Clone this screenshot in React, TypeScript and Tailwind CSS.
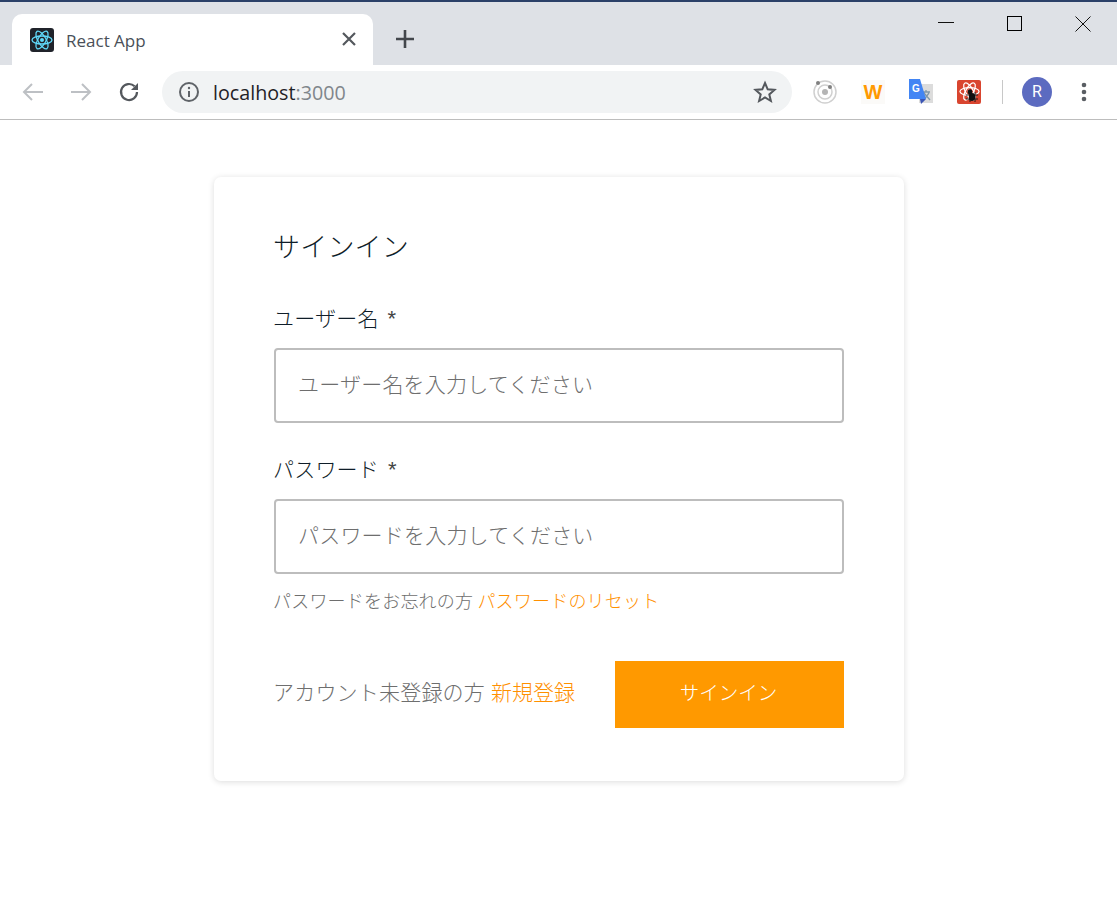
import React from "react";

const Atom = ({ color, size, stroke = 1.4 }: { color: string; size: number; stroke?: number }) => (
  <svg width={size} height={size} viewBox="0 0 24 24" fill="none" stroke={color} strokeWidth={stroke}>
    <ellipse cx="12" cy="12" rx="10" ry="4" />
    <ellipse cx="12" cy="12" rx="10" ry="4" transform="rotate(60 12 12)" />
    <ellipse cx="12" cy="12" rx="10" ry="4" transform="rotate(120 12 12)" />
    <circle cx="12" cy="12" r="2" fill={color} stroke="none" />
  </svg>
);

export default function App() {
  return (
    <div className="min-h-[898px] bg-white font-['Noto_Sans_CJK_JP','Noto_Sans',sans-serif]">
      <div className="h-[2px] bg-[#2b4068]" />
      <div className="flex h-[63px] bg-[#dee1e6] pl-[12px]">
        <div className="mt-[12px] flex h-[51px] w-[361px] items-center rounded-t-[10px] bg-white pl-[18px] pr-[16px]">
          <div className="flex h-[24px] w-[24px] items-center justify-center rounded-[3px] bg-[#20232a]">
            <Atom color="#61dafb" size={24} stroke={1.3} />
          </div>
          <span className="ml-[12px] pt-[2px] font-['Open_Sans',sans-serif] text-[17px] text-[#4a5058]">React App</span>
          <svg className="mb-[2px] ml-auto" width="16" height="16" viewBox="0 0 16 16" stroke="#54585d" strokeWidth="2.2">
            <path d="M2 2 L14 14 M14 2 L2 14" />
          </svg>
        </div>
        <svg className="ml-[22px] mt-[27px]" width="20" height="20" viewBox="0 0 20 20" stroke="#43474c" strokeWidth="2.6">
          <path d="M10 1 V19 M1 10 H19" />
        </svg>
        <div className="ml-auto flex h-[46px] items-start">
          <svg className="mr-[53px] mt-[20px]" width="16" height="2" viewBox="0 0 16 2"><path d="M0 0.5 H16" stroke="#111" strokeWidth="1" /></svg>
          <div className="mr-[53px] mt-[14px] h-[15px] w-[15px] border border-black" />
          <svg className="mr-[26px] mt-[14px]" width="16" height="16" viewBox="0 0 16 16"><path d="M0.5 0.5 L15.5 15.5 M15.5 0.5 L0.5 15.5" stroke="#111" strokeWidth="1" /></svg>
        </div>
      </div>
      <div className="flex h-[55px] items-center border-b border-[#bdbdbd] pb-[1px]">
        <svg className="ml-[21px]" width="24" height="24" viewBox="0 0 24 24" fill="none" stroke="#bdc0c4" strokeWidth="2">
          <path d="M22 12 H3 M11 4 L3 12 L11 20" />
        </svg>
        <svg className="ml-[24px]" width="24" height="24" viewBox="0 0 24 24" fill="none" stroke="#bdc0c4" strokeWidth="2">
          <path d="M2 12 H21 M13 4 L21 12 L13 20" />
        </svg>
        <svg className="ml-[24px]" width="24" height="24" viewBox="0 0 24 24" fill="none">
          <path d="M20 12 A8 8 0 1 1 17.6 6.3" stroke="#54585d" strokeWidth="2.2" />
          <path d="M21 3 V10 H14 Z" fill="#54585d" />
        </svg>
        <div className="ml-[21px] flex h-[42px] w-[630px] items-center rounded-full bg-[#f1f3f4] pl-[16px] pr-[15px]">
          <svg width="22" height="22" viewBox="0 0 22 22" fill="none">
            <circle cx="11" cy="11" r="9" stroke="#5f6368" strokeWidth="2" />
            <path d="M11 10 V16" stroke="#5f6368" strokeWidth="2" />
            <circle cx="11" cy="7" r="1.2" fill="#5f6368" />
          </svg>
          <span className="ml-[13px] pt-[2px] font-['Open_Sans',sans-serif] text-[19.7px] leading-none">
            <span className="text-[#1f2226]">localhost</span>
            <span className="text-[#80868b]">:3000</span>
          </span>
          <svg className="ml-auto" width="24" height="24" viewBox="0 0 24 24" fill="none" stroke="#54585d" strokeWidth="2">
            <path d="M12 3 L14.7 9.3 L21.5 9.9 L16.3 14.4 L17.9 21 L12 17.5 L6.1 21 L7.7 14.4 L2.5 9.9 L9.3 9.3 Z" />
          </svg>
        </div>
        <svg className="ml-[21px]" width="24" height="24" viewBox="0 0 24 24" fill="none">
          <circle cx="12" cy="12" r="11" stroke="#d0d0d0" strokeWidth="1.5" />
          <circle cx="12" cy="12" r="7" stroke="#d0d0d0" strokeWidth="1.5" />
          <circle cx="12" cy="12" r="3" fill="#b5b5b5" />
          <circle cx="5" cy="3" r="2" fill="#808080" />
          <circle cx="17" cy="7" r="2" fill="#808080" />
        </svg>
        <div className="ml-[24px] flex h-[24px] w-[24px] items-center justify-center bg-[#fbfaf8] font-['Liberation_Sans',sans-serif] text-[20px] font-bold leading-none text-[#ff9900]">
          W
        </div>
        <svg className="ml-[24px]" width="24" height="26" viewBox="0 0 24 26">
          <rect x="10" y="5" width="14" height="19" fill="#dcdcdc" />
          <path d="M13 13 H21 M17 11 V13 M14 22 L20 14 M15 14 L21 21" stroke="#7f97a8" strokeWidth="1.3" fill="none" />
          <path d="M0 0 H11 L17 20 H0 Z" fill="#4285f4" />
          <path d="M11 20 H17 L12 25 Z" fill="#3b55b5" />
          <text x="3" y="13" fontSize="10" fontWeight="700" fill="#fff" fontFamily="Liberation Sans">G</text>
        </svg>
        <div className="relative ml-[24px] flex h-[24px] w-[24px] items-center justify-center rounded-[2px] bg-[#d9452f]">
          <Atom color="#ffffff" size={23} stroke={1.3} />
          <svg className="absolute left-[9px] top-[9px]" width="12" height="13" viewBox="0 0 12 13">
            <circle cx="4" cy="3" r="2.4" fill="#111" />
            <ellipse cx="6" cy="8" rx="3.2" ry="4" fill="#111" />
            <path d="M0 6 L12 6 M0 10 L12 10 M4 0 V13 M9 3 V13" stroke="#111" strokeWidth="0.9" />
          </svg>
        </div>
        <div className="ml-[21px] h-[24px] w-px bg-[#c8c8c8]" />
        <div className="ml-[19px] flex h-[30px] w-[30px] items-center justify-center rounded-full bg-[#5c6bc0] font-['Roboto',sans-serif] text-[16px] text-white">
          R
        </div>
        <svg className="ml-[21px]" width="22" height="24" viewBox="0 0 22 24" fill="#5a5e63">
          <circle cx="11" cy="5" r="2.3" />
          <circle cx="11" cy="12" r="2.3" />
          <circle cx="11" cy="19" r="2.3" />
        </svg>
      </div>
      <div className="flex justify-center pl-[1px] pt-[57px]">
        <div className="flex h-[604px] w-[690px] flex-col rounded-[7px] bg-white px-[60px] pt-[49px] shadow-[0_1px_6px_rgba(0,0,0,0.14)]">
          <h1 className="-ml-[1px] h-[40px] text-[27px] font-light leading-[40px] tracking-[0.2px] text-[#0f1d29]">サインイン</h1>
          <label className="-ml-[1px] mt-[37px] h-[30px] text-[21px] font-light leading-[28px] tracking-[0.2px] text-[#0f1d29]">
            ユーザー名<span className="ml-[9px] font-['Liberation_Sans',sans-serif] text-[22px] text-[#444]">*</span>
          </label>
          <input
            readOnly
            placeholder="ユーザー名を入力してください"
            className="mt-[15px] h-[75px] w-full rounded-[4px] border-2 border-[#bdbdbd] pb-[5px] pl-[22px] pr-[23px] text-[21px] font-light tracking-[0.2px] outline-none placeholder:text-[#6e6e6e]"
          />
          <label className="-ml-[1px] mt-[31px] h-[30px] text-[21px] font-light leading-[28px] tracking-[0.2px] text-[#0f1d29]">
            パスワード<span className="ml-[9px] font-['Liberation_Sans',sans-serif] text-[22px] text-[#444]">*</span>
          </label>
          <input
            readOnly
            placeholder="パスワードを入力してください"
            className="mt-[15px] h-[75px] w-full rounded-[4px] border-2 border-[#bdbdbd] pb-[5px] pl-[22px] pr-[23px] text-[21px] font-light tracking-[0.2px] outline-none placeholder:text-[#6e6e6e]"
          />
          <p className="-ml-[1px] mt-[14px] h-[26px] text-[18px] font-light leading-[24px] tracking-[0.2px] text-[#6e6e6e]">
            パスワードをお忘れの方 <span className="text-[#ff9000]">パスワードのリセット</span>
          </p>
          <div className="mt-[47px] flex items-center justify-between">
            <p className="-ml-[1px] pb-[6px] text-[21px] font-light tracking-[0.2px] text-[#6e6e6e]">
              アカウント未登録の方<span className="ml-[6px] tracking-normal text-[#ff9000]">新規登録</span>
            </p>
            <button className="h-[67px] w-[229px] bg-[#ff9900] pb-[6px] pr-[2px] text-[19.5px] font-light text-white">サインイン</button>
          </div>
        </div>
      </div>
    </div>
  );
}
